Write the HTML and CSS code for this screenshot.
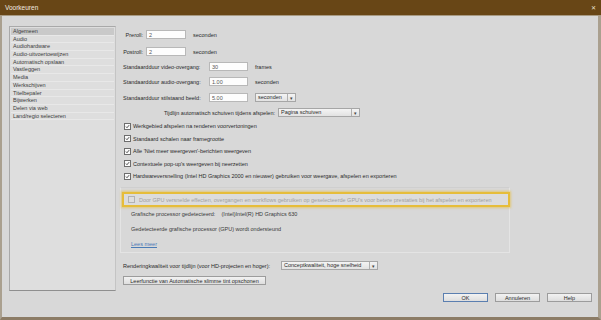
FILE: index.html
```html
<!DOCTYPE html>
<html lang="nl">
<head>
<meta charset="UTF-8">
<title>Voorkeuren</title>
<link rel="stylesheet" href="styles.css">
</head>
<body>
<div class="window">
  <div class="titlebar">
    <span class="title">Voorkeuren</span>
    <span class="close">&#x2715;</span>
  </div>
  <div class="main">
    <ul class="categories">
      <li class="selected">Algemeen</li>
      <li>Audio</li>
      <li>Audiohardware</li>
      <li>Audio-uitvoertoewijzen</li>
      <li>Automatisch opslaan</li>
      <li>Vastleggen</li>
      <li>Media</li>
      <li>Werkschijven</li>
      <li>Titelbepaler</li>
      <li>Bijwerken</li>
      <li>Delen via web</li>
      <li>Land/regio selecteren</li>
    </ul>

    <div class="settings">
      <div class="row r-preroll">
        <label class="short">Preroll:</label>
        <span class="field w40">2</span>
        <span class="unit">seconden</span>
      </div>
      <div class="row r-postroll">
        <label class="short">Postroll:</label>
        <span class="field w40">2</span>
        <span class="unit">seconden</span>
      </div>
      <div class="row r-video">
        <label class="long">Standaardduur video-overgang:</label>
        <span class="field w39">30</span>
        <span class="unit">frames</span>
      </div>
      <div class="row r-audio">
        <label class="long">Standaardduur audio-overgang:</label>
        <span class="field w39">1.00</span>
        <span class="unit">seconden</span>
      </div>
      <div class="row r-still">
        <label class="long">Standaardduur stilstaand beeld:</label>
        <span class="field w39">5.00</span>
        <span class="select sel-unit"><span class="sel-text">seconden</span><span class="arrow">&#9662;</span></span>
      </div>
      <div class="row r-scroll">
        <label class="scroll-label">Tijdlijn automatisch schuiven tijdens afspelen:</label>
        <span class="select sel-scroll"><span class="sel-text">Pagina schuiven</span><span class="arrow">&#9662;</span></span>
      </div>

      <div class="checks">
        <div class="check"><span class="box on"><svg viewBox="0 0 7 7"><polyline points="1.3,3.6 2.8,5.2 5.8,1.6"/></svg></span>Werkgebied afspelen na renderen voorvertoningen</div>
        <div class="check"><span class="box on"><svg viewBox="0 0 7 7"><polyline points="1.3,3.6 2.8,5.2 5.8,1.6"/></svg></span>Standaard schalen naar framegrootte</div>
        <div class="check"><span class="box on"><svg viewBox="0 0 7 7"><polyline points="1.3,3.6 2.8,5.2 5.8,1.6"/></svg></span>Alle 'Niet meer weergeven'-berichten weergeven</div>
        <div class="check"><span class="box on"><svg viewBox="0 0 7 7"><polyline points="1.3,3.6 2.8,5.2 5.8,1.6"/></svg></span>Contextuele pop-up's weergeven bij neerzetten</div>
        <div class="check"><span class="box on"><svg viewBox="0 0 7 7"><polyline points="1.3,3.6 2.8,5.2 5.8,1.6"/></svg></span>Hardwareversnelling (Intel HD Graphics 2000 en nieuwer) gebruiken voor weergave, afspelen en exporteren</div>
      </div>

      <div class="gpu-group">
        <div class="gpu-highlight">
          <span class="box off"></span>Door GPU versnelde effecten, overgangen en workflows gebruiken op geselecteerde GPU's voor betere prestaties bij het afspelen en exporteren
        </div>
        <div class="gpu-info">
          <span class="gpu-label">Grafische processor gedetecteerd:</span>
          <span>(Intel)Intel(R) HD Graphics 630</span>
        </div>
        <div class="gpu-info">Gedetecteerde grafische processor (GPU) wordt ondersteund</div>
        <a class="gpu-info link" href="#">Lees meer</a>
      </div>

      <div class="row r-render">
        <label class="render-label">Renderingkwaliteit voor tijdlijn (voor HD-projecten en hoger):</label>
        <span class="select sel-render"><span class="sel-text">Conceptkwaliteit, hoge snelheid</span><span class="arrow">&#9662;</span></span>
      </div>
      <div class="row r-reset">
        <button class="btn wide">Leerfunctie van Automatische slimme tint opschonen</button>
      </div>
    </div>
  </div>
  <div class="footer">
    <button class="btn default">OK</button>
    <button class="btn">Annuleren</button>
    <button class="btn">Help</button>
  </div>
</div>
</body>
</html>
```

FILE: styles.css
```css
* {
  box-sizing: border-box;
}

body {
  margin: 0;
  width: 601px;
  height: 320px;
  overflow: hidden;
  font-family: "Liberation Sans", Arial, sans-serif;
  font-size: 5.5px;
  color: #2a2a2a;
  background: #d8d8d8;
}

.window {
  width: 601px;
  height: 320px;
  border-left: 2px solid #aaa08f;
  border-right: 3px solid #aaa08f;
  border-bottom: 3px solid #8c7c66;
  background: #d8d8d8;
  display: flex;
  flex-direction: column;
}

.titlebar {
  height: 16px;
  margin-left: -2px;
  margin-right: -3px;
  background: #684616;
  border-bottom: 1px solid #a89a82;
  display: flex;
  align-items: center;
  justify-content: space-between;
  padding: 0 5px 0 5px;
  color: #f2ece2;
}

.title {
  font-size: 6.5px;
}

.close {
  font-size: 6px;
  color: #e8e0d0;
}

.main {
  flex: 1;
  display: flex;
  padding: 10px 0 0 7px;
}

.categories {
  list-style: none;
  margin: 0;
  padding: 1px 1px;
  width: 107px;
  height: 265px;
  background: #dedede;
  border: 1px solid #a9a9a9;
  border-right-color: #c4c4c4;
  border-bottom-color: #8f8f8f;
}

.categories li {
  height: 7.7px;
  line-height: 7.7px;
  padding-left: 2px;
  color: #3c3c3c;
  border-bottom: 1px solid #e8e8e8;
}

.categories li.selected {
  background: #c9c9c9;
}

.settings {
  margin-left: 4px;
  width: 395px;
  display: flex;
  flex-direction: column;
}

.row {
  display: flex;
  align-items: center;
  height: 9px;
}

.r-preroll { margin-top: 4px; }
.r-postroll { margin-top: 8px; }
.r-video { margin-top: 6px; }
.r-audio { margin-top: 6px; }
.r-still { margin-top: 7px; }
.r-scroll { margin-top: 6px; }

label.short {
  width: 26px;
  text-align: right;
  padding-right: 3px;
}

label.long {
  width: 89px;
  padding-left: 3px;
}

.field {
  height: 9px;
  line-height: 8px;
  padding-left: 2px;
  background: #fdfdfd;
  border: 1px solid #b8b8b8;
  color: #555;
}

.w40 { width: 40px; }
.w39 { width: 39px; }

.unit {
  margin-left: 7px;
}

.select {
  display: flex;
  align-items: center;
  height: 9px;
  background: linear-gradient(#f4f4f4, #e2e2e2);
  border: 1px solid #a6a6a6;
}

.sel-text {
  flex: 1;
  padding-left: 2px;
  border-right: 1px solid #b0b0b0;
  height: 100%;
  line-height: 7px;
}

.arrow {
  width: 7px;
  text-align: center;
  font-size: 5px;
  color: #444;
}

.sel-unit {
  width: 41px;
  margin-left: 7px;
}

.scroll-label {
  width: 158px;
  text-align: right;
  padding-right: 3px;
}

.sel-scroll {
  width: 82px;
}

.checks {
  margin-top: 5px;
  display: flex;
  flex-direction: column;
  gap: 4.5px;
}

.check {
  display: flex;
  align-items: center;
  height: 8px;
  padding-left: 4px;
}

.box {
  width: 7px;
  height: 7px;
  margin-right: 2px;
  border: 1px solid #6d6d6d;
  background: #fbfbfb;
  display: inline-flex;
}

.box svg {
  width: 100%;
  height: 100%;
  fill: none;
  stroke: #222;
  stroke-width: 1.1;
}

.box.off {
  border-color: #b2b2b2;
  background: #dedede;
  margin-right: 4px;
}

.gpu-group {
  margin-top: 7px;
  height: 66px;
  width: 390px;
  border: 1px solid #e4e4e4;
  border-top-color: #cfcfcf;
  display: flex;
  flex-direction: column;
}

.gpu-highlight {
  margin: 4px 0 0 1px;
  height: 15px;
  width: 388px;
  display: flex;
  align-items: center;
  padding-left: 4px;
  color: #a0a0a0;
  background: #dcdcdc;
  border: 2px solid #e6bd3a;
  box-shadow: 0 0 2px 1px rgba(230, 190, 60, 0.6);
}

.gpu-info {
  margin: 3px 0 0 10px;
  height: 8px;
  line-height: 8px;
  color: #3a3a3a;
}

.gpu-info + .gpu-info {
  margin-top: 7px;
}

.gpu-label {
  display: inline-block;
  width: 89px;
}

.link {
  width: 30px;
  color: #4a7bb6;
  text-decoration: underline;
}

.r-render {
  margin-top: 8px;
}

.render-label {
  width: 161px;
  padding-left: 3px;
}

.sel-render {
  width: 97px;
}

.r-reset {
  margin-top: 6px;
  padding-left: 3px;
}

.btn {
  font-family: inherit;
  font-size: 5.5px;
  color: #2a2a2a;
  height: 9px;
  padding: 0;
  background: linear-gradient(#f2f2f2, #dedede);
  border: 1px solid #9c9c9c;
}

.btn.wide {
  width: 143px;
}

.footer {
  height: 25px;
  display: flex;
  justify-content: flex-end;
  align-items: flex-start;
  gap: 7px;
  padding: 1px 6px 0 0;
}

.footer .btn {
  width: 45px;
}

.footer .btn.default {
  border-color: #5b7fb0;
}
```
